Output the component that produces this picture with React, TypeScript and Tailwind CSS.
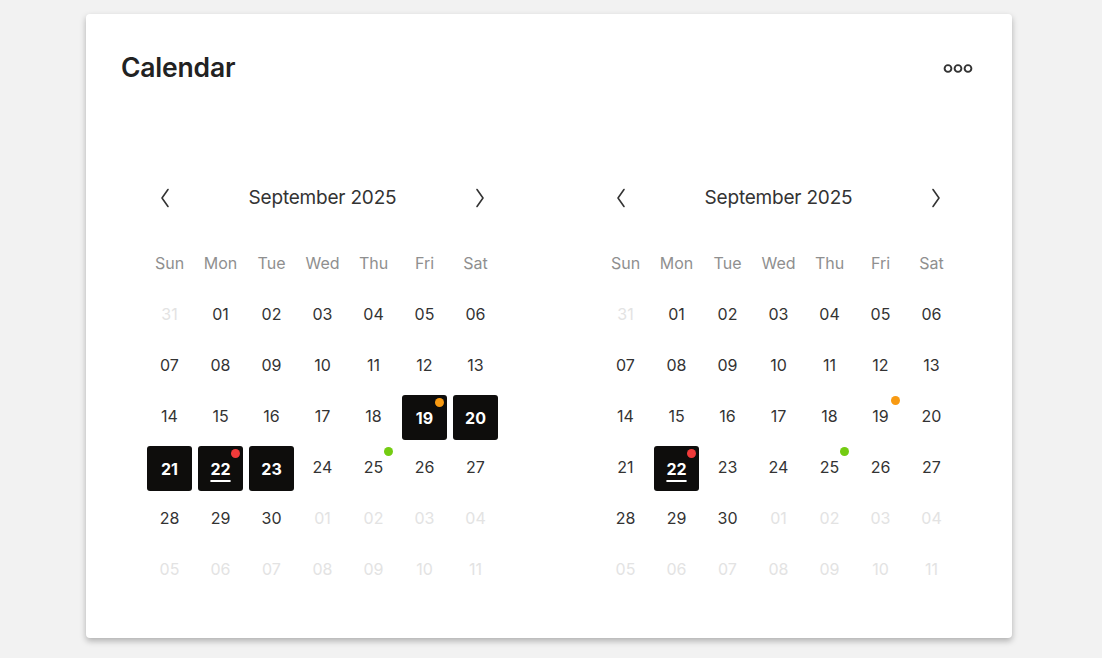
import React from "react";

type Day = { n: string; muted?: boolean; selected?: boolean; today?: boolean; dot?: string };

const ORANGE = "bg-[#f89a12]";
const RED = "bg-[#f03a3a]";
const GREEN = "bg-[#74cc12]";

function buildDays(selected: number[], dots: Record<number, string>): Day[] {
  const days: Day[] = [{ n: "31", muted: true }];
  for (let i = 1; i <= 30; i++) {
    days.push({
      n: String(i).padStart(2, "0"),
      selected: selected.includes(i),
      today: i === 22,
      dot: dots[i],
    });
  }
  for (let i = 1; i <= 11; i++) days.push({ n: String(i).padStart(2, "0"), muted: true });
  return days;
}

const WEEK = ["Sun", "Mon", "Tue", "Wed", "Thu", "Fri", "Sat"];

function Chevron({ dir }: { dir: "left" | "right" }) {
  return (
    <svg width="10" height="20" viewBox="0 0 10 20" fill="none">
      <path
        d={dir === "left" ? "M8 1.5 L2 10 L8 18.5" : "M2 1.5 L8 10 L2 18.5"}
        stroke="#333"
        strokeWidth="1.6"
        strokeLinecap="round"
        strokeLinejoin="round"
      />
    </svg>
  );
}

function Month({ days }: { days: Day[] }) {
  return (
    <div className="w-[357px]">
      <div className="h-[40px] flex items-center justify-between px-[16px]">
        <Chevron dir="left" />
        <span className="text-[19px] text-[#333] tracking-[-0.2px]">September 2025</span>
        <Chevron dir="right" />
      </div>
      <div className="mt-[19px] grid grid-cols-7">
        {WEEK.map((w) => (
          <div key={w} className="h-[51px] flex items-center justify-center text-[16px] text-[#8f8f8f]">
            {w}
          </div>
        ))}
        {days.map((d, i) => (
          <div key={i} className="h-[51px] flex items-center justify-center">
            <div
              className={
                "relative w-[45px] h-[45px] flex items-center justify-center rounded-[3px] text-[16px] " +
                (d.selected
                  ? "bg-[#0e0d0c] text-white font-bold translate-y-[2px]"
                  : d.muted
                  ? "text-[#e3e3e3]"
                  : "text-[#333]")
              }
            >
              <span className={d.today ? "underline decoration-[1.5px] underline-offset-[5px]" : ""}>{d.n}</span>
              {d.dot && <span className={"absolute top-[3px] right-[3px] w-[9px] h-[9px] rounded-full " + d.dot} />}
            </div>
          </div>
        ))}
      </div>
    </div>
  );
}

export default function App() {
  const left = buildDays([19, 20, 21, 22, 23], { 19: ORANGE, 22: RED, 25: GREEN });
  const right = buildDays([22], { 19: ORANGE, 22: RED, 25: GREEN });
  return (
    <div
      className="w-[1102px] h-[658px] bg-[#f2f2f2] pl-[86px] pt-[14px]"
      style={{ fontFamily: "Inter, 'Liberation Sans', sans-serif" }}
    >
      <div className="w-[926px] h-[624px] bg-white rounded-[4px] shadow-[0_3px_6px_rgba(0,0,0,0.28)]">
        <div className="pt-[38px] pl-[35px] pr-[39px] h-[70px] flex items-center justify-between">
          <h1 className="text-[26.5px] font-semibold text-[#222] tracking-[-0.2px]">Calendar</h1>
          <svg width="30" height="11" viewBox="0 0 30 11">
            <circle cx="5" cy="5.5" r="3.4" fill="none" stroke="#333" strokeWidth="1.9" />
            <circle cx="15" cy="5.5" r="3.4" fill="none" stroke="#333" strokeWidth="1.9" />
            <circle cx="25" cy="5.5" r="3.4" fill="none" stroke="#333" strokeWidth="1.9" />
          </svg>
        </div>
        <div className="mt-[94px] pl-[58px] flex gap-[99px]">
          <Month days={left} />
          <Month days={right} />
        </div>
      </div>
    </div>
  );
}
